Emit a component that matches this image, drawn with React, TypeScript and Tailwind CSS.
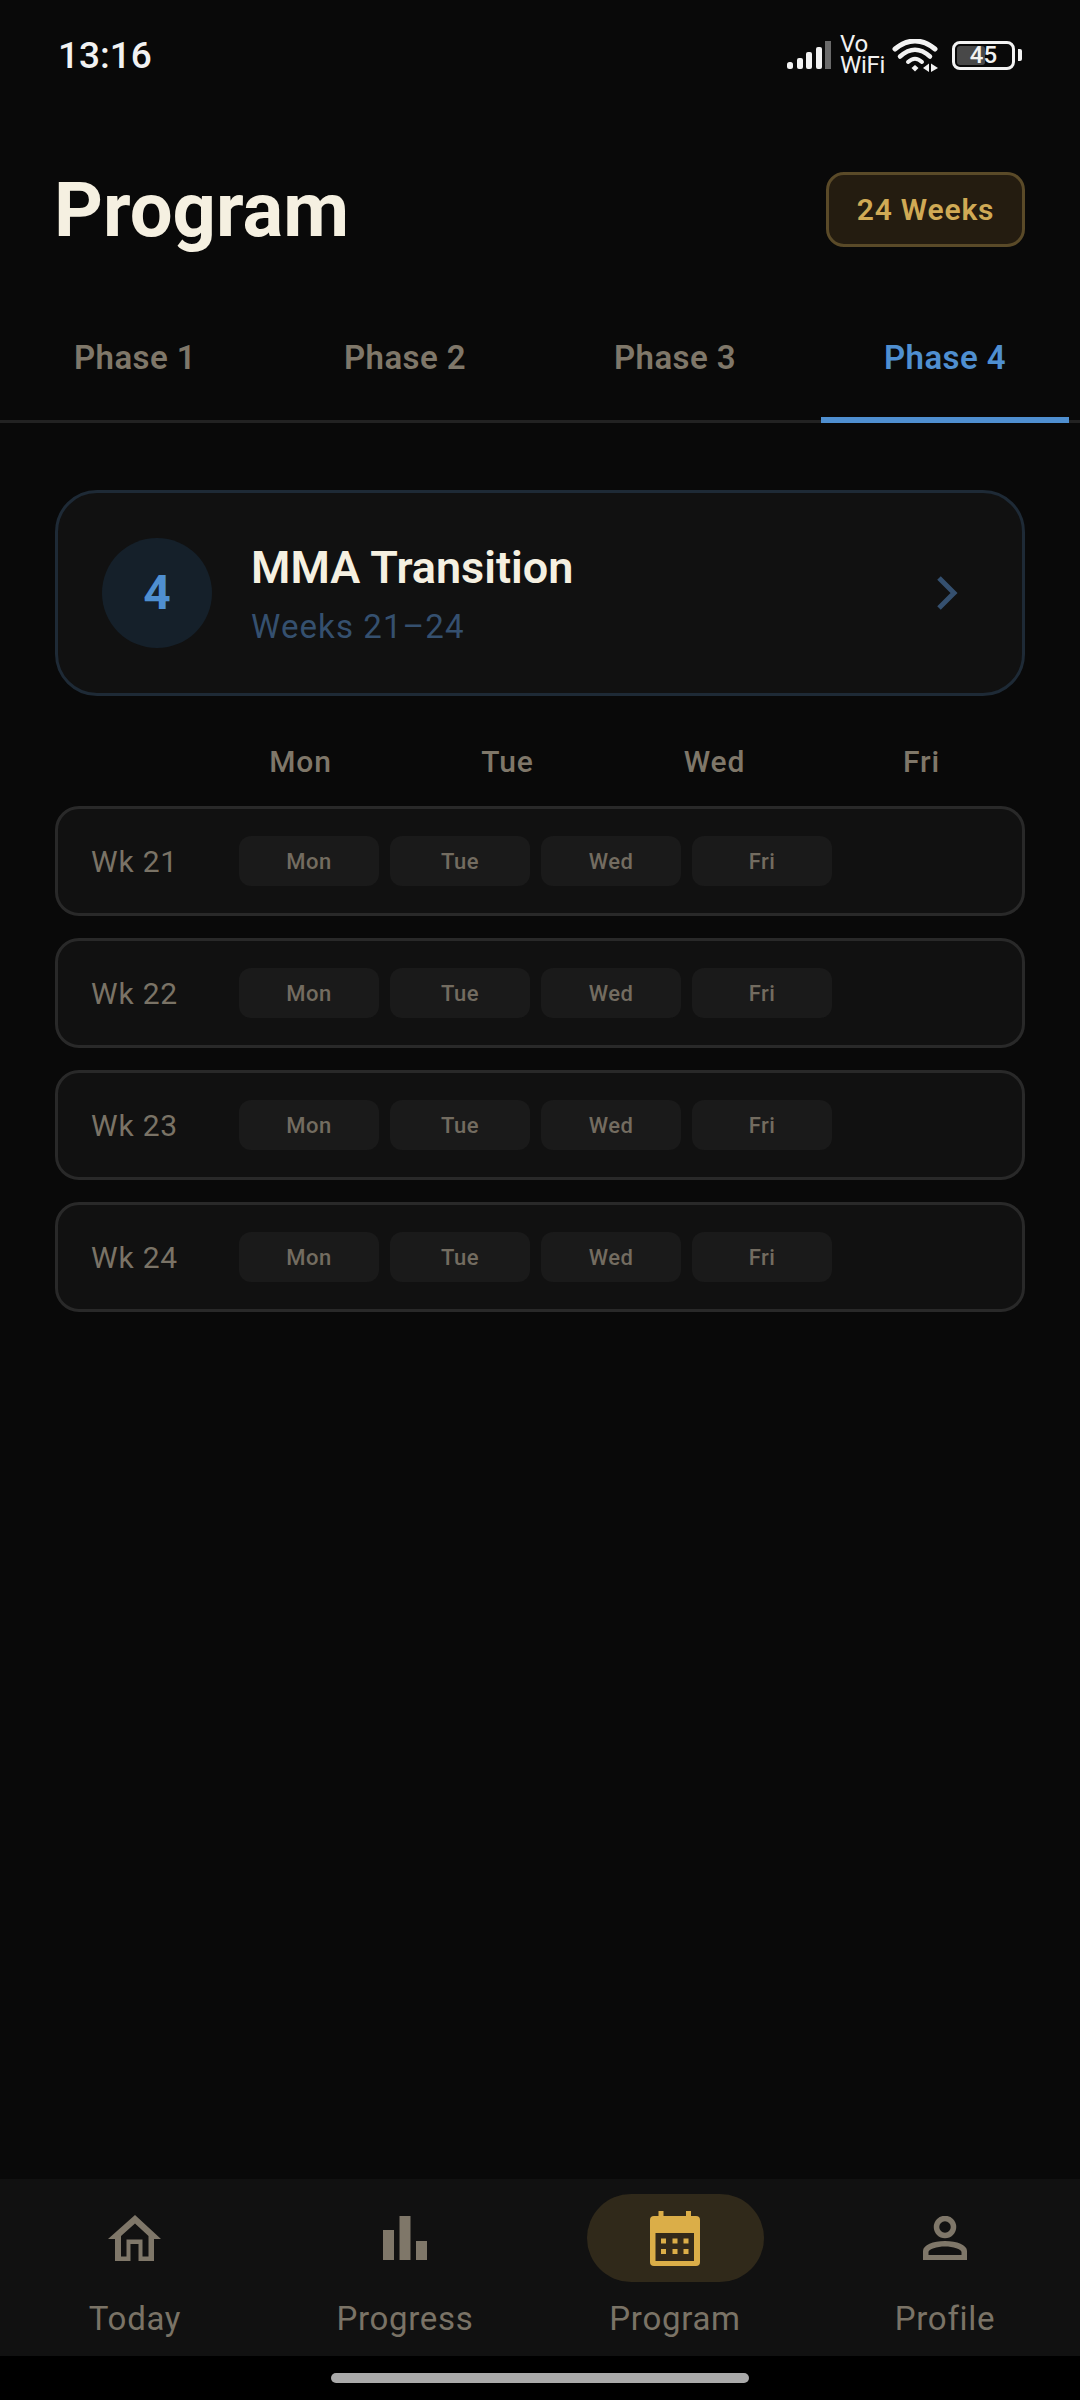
import { ReactNode } from 'react';

const phases = ['Phase 1', 'Phase 2', 'Phase 3', 'Phase 4'];
const days = ['Mon', 'Tue', 'Wed', 'Fri'];
const weeks = ['Wk 21', 'Wk 22', 'Wk 23', 'Wk 24'];

function StatusIcons() {
  return (
    <div className="flex items-center">
      <svg width="45" height="29" viewBox="0 0 45 29" fill="#f2f2f2">
        <rect x="0" y="21" width="6" height="7" rx="2.5" />
        <rect x="10" y="17" width="6" height="11" rx="2" />
        <rect x="19" y="11" width="6" height="17" rx="2" />
        <rect x="29" y="6" width="6" height="22" rx="2" />
        <rect x="38" y="0" width="6" height="28" fill="#6a6a6a" />
      </svg>
      <div className="ml-[8px] w-[42px] whitespace-nowrap text-[24px] leading-[21px] tracking-[-0.3px] text-[#f2f2f2]">
        Vo
        <br />
        WiFi
      </div>
      <svg className="ml-[8px]" width="48" height="33" viewBox="0 0 48 33" fill="none">
        <path d="M5 10 Q25 -6 45 10" stroke="#f2f2f2" strokeWidth="5" strokeLinecap="round" />
        <path d="M10 17.5 Q25 4 40 17.5" stroke="#f2f2f2" strokeWidth="4.5" strokeLinecap="round" />
        <path d="M18 23 Q25 16.5 32 23" stroke="#f2f2f2" strokeWidth="4" strokeLinecap="round" />
        <path d="M21.5 29 L25 26 L28.5 29 L25 32.5 Z" fill="#f2f2f2" />
        <path d="M33 29 L39 24.5 V33 Z" fill="#f2f2f2" />
        <path d="M41 24.5 L48 29 L41 33 Z" fill="#f2f2f2" />
      </svg>
      <div className="relative ml-[14px] flex h-[29px] w-[63px] items-center rounded-[8px] border-[3px] border-[#f2f2f2] p-[2px]">
        <div className="h-full w-[28px] rounded-[3px] bg-[#484848]" />
        <span className="absolute inset-0 flex items-center justify-center text-[24px] font-medium text-[#f2f2f2]">45</span>
      </div>
      <div className="ml-[3px] h-[12px] w-[4px] rounded-r-[2px] bg-[#f2f2f2]" />
    </div>
  );
}

function HomeIcon() {
  return (
    <svg width="54" height="46" viewBox="0 0 54 46" fill="#7f7769">
      <path
        fillRule="evenodd"
        d="M27 0 L53 24 H46 V46 H7 V24 H0 Z M27 8.5 L13 21 V41.5 H18.5 V24.5 H34.5 V41.5 H40.5 V21 Z M22.5 29 V46 H30.5 V29 Z"
      />
    </svg>
  );
}

function BarsIcon() {
  return (
    <svg width="45" height="44" viewBox="0 0 45 44" fill="#7f7769">
      <rect x="0" y="14" width="11" height="30" />
      <rect x="16.5" y="0" width="11" height="44" />
      <rect x="33" y="25" width="11" height="19" />
    </svg>
  );
}

function CalendarIcon() {
  return (
    <svg width="50" height="55" viewBox="0 0 50 55" fill="#dbae48">
      <rect x="0" y="5" width="50" height="50" rx="4" />
      <rect x="8.5" y="0" width="5" height="8" />
      <rect x="36" y="0" width="5" height="8" />
      <rect x="5.5" y="22" width="38.5" height="28" fill="#32291a" />
      <rect x="11" y="27.5" width="5" height="5" />
      <rect x="22.5" y="27.5" width="5" height="5" />
      <rect x="33.5" y="27.5" width="5" height="5" />
      <rect x="11" y="38" width="5" height="5" />
      <rect x="22.5" y="38" width="5" height="5" />
      <rect x="33.5" y="38" width="5" height="5" />
    </svg>
  );
}

function PersonIcon() {
  return (
    <svg width="45" height="44" viewBox="0 0 45 44" fill="#7f7769">
      <circle cx="22" cy="11" r="8.5" fill="none" stroke="#7f7769" strokeWidth="5.5" />
      <path
        fillRule="evenodd"
        d="M0 44 V35 C0 29 10 25 22 25 C34 25 44 29 44 35 V44 Z M5.5 39 H38.5 V36 C38.5 33 30 30.5 22 30.5 C14 30.5 5.5 33 5.5 36 Z"
      />
    </svg>
  );
}

function NavItem({ icon, label, active }: { icon: ReactNode; label: string; active?: boolean }) {
  return (
    <div className="flex w-[270px] flex-col items-center pt-[15px]">
      <div className={`flex h-[88px] w-[177px] items-center justify-center rounded-full ${active ? 'bg-[#30291a]' : ''}`}>
        {icon}
      </div>
      <span className="mt-[17px] text-[33px] leading-[40px] tracking-[0.7px] text-[#7a7366]">{label}</span>
    </div>
  );
}

export default function App() {
  return (
    <div className="flex h-[2400px] w-[1080px] flex-col overflow-hidden bg-[#090909] font-['Roboto',sans-serif]">
      {/* status bar */}
      <div className="flex h-[112px] items-center justify-between pb-[2px] pl-[58px] pr-[58px]">
        <span className="text-[37px] font-medium leading-none text-[#f2f2f2]">13:16</span>
        <StatusIcons />
      </div>

      {/* header */}
      <div className="mt-[60px] flex h-[75px] items-center justify-between pl-[54px] pr-[55px]">
        <h1 className="text-[76px] font-bold leading-none text-[#f5f0e1]">Program</h1>
        <div className="flex h-[75px] w-[199px] items-center justify-center rounded-[18px] border-[3px] border-[#5a4a28] bg-[#241c10] text-[30px] font-semibold tracking-[0.8px] text-[#d0aa55]">
          24 Weeks
        </div>
      </div>

      {/* tabs */}
      <div className="mt-[74px] flex h-[102px] border-b-[3px] border-[#222222]">
        {phases.map((phase, i) => (
          <div key={phase} className="relative flex w-[270px] items-start justify-center pt-[17px]">
            <span className={`text-[33px] font-semibold leading-[40px] tracking-[0.4px] ${i === 3 ? 'text-[#4f8fd0]' : 'text-[#7f7769]'}`}>
              {phase}
            </span>
            {i === 3 && <div className="absolute bottom-[-3px] left-[11px] h-[6px] w-[248px] bg-[#4f8fd0]" />}
          </div>
        ))}
      </div>

      {/* phase card */}
      <div className="mx-[55px] mt-[67px] flex h-[206px] items-center rounded-[42px] border-[3px] border-[#1e2a36] bg-[#111111] pl-[44px] pr-[64px]">
        <div className="flex h-[110px] w-[110px] items-center justify-center rounded-full bg-[#15202a] text-[48px] font-bold text-[#4f8fd0]">
          4
        </div>
        <div className="ml-[39px] flex-1 pt-[3px]">
          <div className="text-[45px] font-semibold leading-[52px] text-[#f5f0e1]">MMA Transition</div>
          <div className="mt-[13px] text-[33px] leading-[40px] tracking-[1.1px] text-[#35506f]">Weeks 21–24</div>
        </div>
        <svg width="22" height="34" viewBox="0 0 22 34" fill="none">
          <path d="M3 2 L18 17 L3 32" stroke="#35506f" strokeWidth="5" />
        </svg>
      </div>

      {/* day headers */}
      <div className="mt-[48px] flex pl-[197px] pr-[55px]">
        {days.map((d) => (
          <div key={d} className="flex-1 text-center text-[30px] font-medium leading-[36px] tracking-[0.9px] text-[#7f7769]">
            {d}
          </div>
        ))}
      </div>

      {/* weeks */}
      <div className="mt-[26px] flex flex-col gap-[22px] px-[55px]">
        {weeks.map((w) => (
          <div key={w} className="flex h-[110px] items-center rounded-[24px] border-[3px] border-[#292929] bg-[#111111] pl-[33px]">
            <span className="w-[148px] pt-[2px] text-[30px] leading-[36px] tracking-[0.8px] text-[#7a7366]">{w}</span>
            <div className="flex gap-[11px]">
              {days.map((d) => (
                <div key={d} className="flex h-[50px] w-[140px] items-center justify-center rounded-[12px] bg-[#1a1a1a] text-[22px] font-medium tracking-[0.5px] text-[#736c60]">
                  {d}
                </div>
              ))}
            </div>
          </div>
        ))}
      </div>

      <div className="flex-1" />

      {/* bottom nav */}
      <div className="flex h-[177px] bg-[#111111]">
        <NavItem icon={<HomeIcon />} label="Today" />
        <NavItem icon={<BarsIcon />} label="Progress" />
        <NavItem icon={<CalendarIcon />} label="Program" active />
        <NavItem icon={<PersonIcon />} label="Profile" />
      </div>
      <div className="flex h-[44px] justify-center bg-black pt-[17px]">
        <div className="h-[10px] w-[418px] rounded-full bg-[#aaaaaa]" />
      </div>
    </div>
  );
}
